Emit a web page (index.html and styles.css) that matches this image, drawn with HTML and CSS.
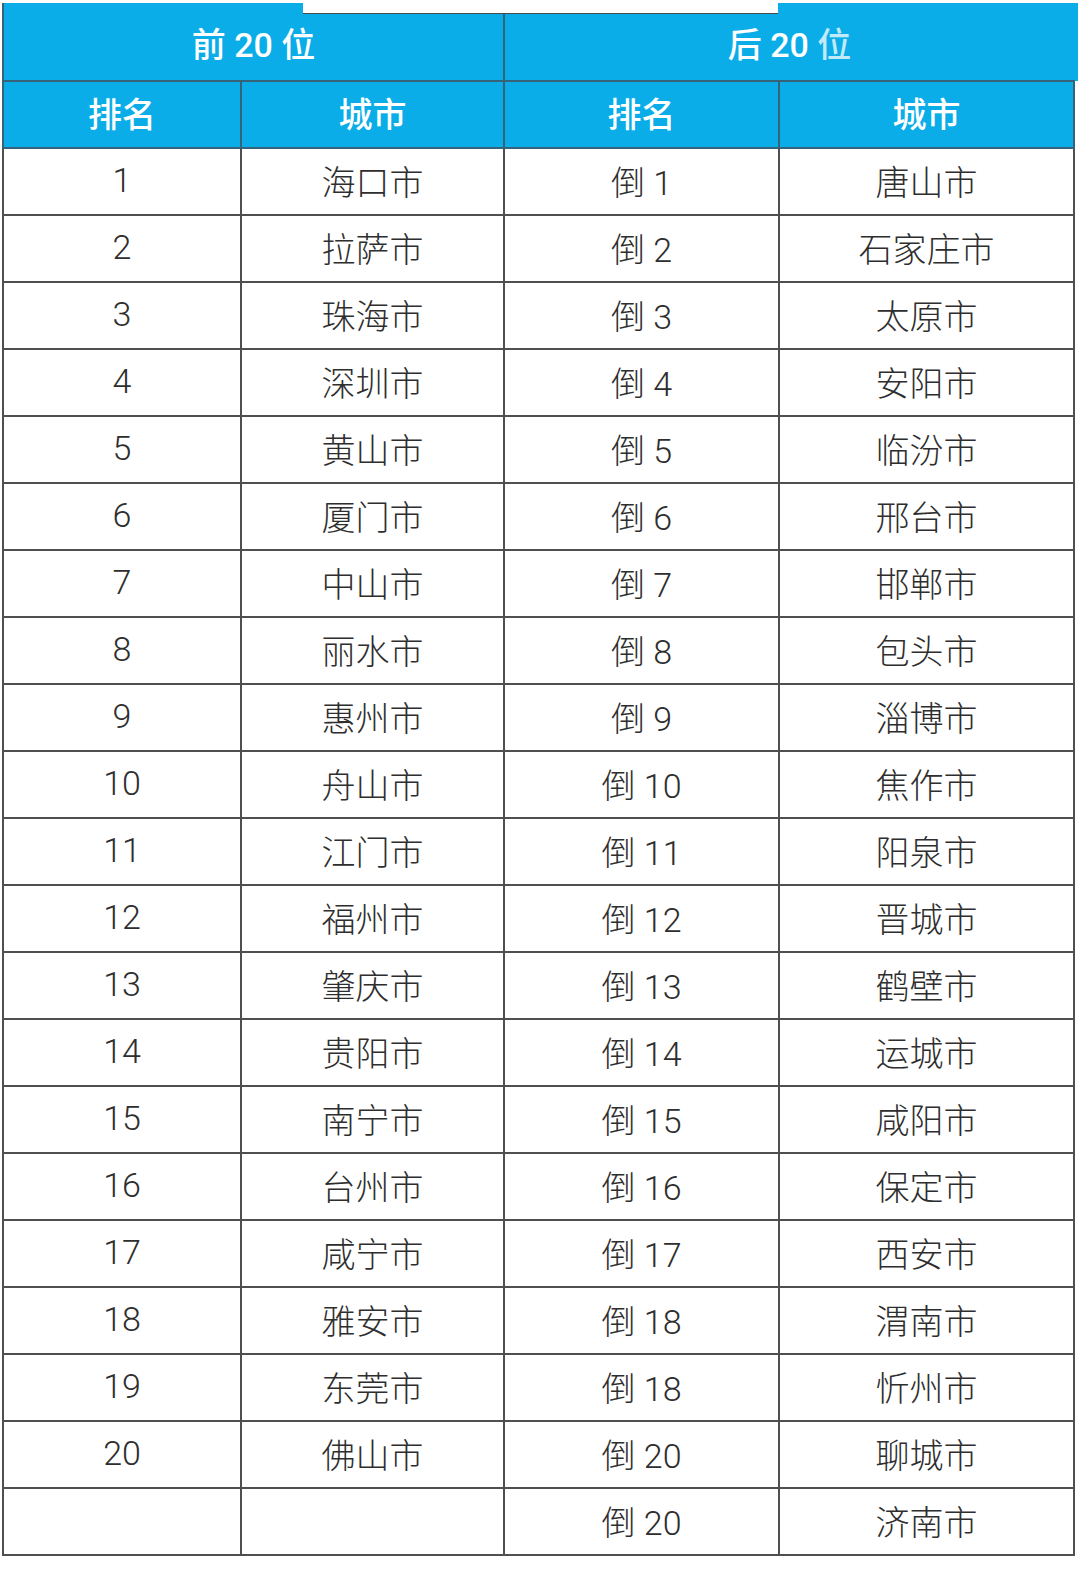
FILE: index.html
```html
<!DOCTYPE html>
<html lang="zh-CN">
<head>
<meta charset="utf-8">
<title>城市排名</title>
<link rel="stylesheet" href="styles.css">
</head>
<body>
<div class="page">
  <div class="gap-mask"></div>
  <table class="rank">
    <colgroup>
      <col class="c1"><col class="c2"><col class="c3"><col class="c4">
    </colgroup>
    <thead>
      <tr class="group">
        <th colspan="2">前 20 位</th>
        <th colspan="2" class="right-tab">后 20 <span class="blur">位</span></th>
      </tr>
      <tr class="sub">
        <th>排名</th><th>城市</th><th>排名</th><th>城市</th>
      </tr>
    </thead>
    <tbody>
      <tr><td>1</td><td>海口市</td><td>倒 1</td><td>唐山市</td></tr>
      <tr><td>2</td><td>拉萨市</td><td>倒 2</td><td>石家庄市</td></tr>
      <tr><td>3</td><td>珠海市</td><td>倒 3</td><td>太原市</td></tr>
      <tr><td>4</td><td>深圳市</td><td>倒 4</td><td>安阳市</td></tr>
      <tr><td>5</td><td>黄山市</td><td>倒 5</td><td>临汾市</td></tr>
      <tr><td>6</td><td>厦门市</td><td>倒 6</td><td>邢台市</td></tr>
      <tr><td>7</td><td>中山市</td><td>倒 7</td><td>邯郸市</td></tr>
      <tr><td>8</td><td>丽水市</td><td>倒 8</td><td>包头市</td></tr>
      <tr><td>9</td><td>惠州市</td><td>倒 9</td><td>淄博市</td></tr>
      <tr><td>10</td><td>舟山市</td><td>倒 10</td><td>焦作市</td></tr>
      <tr><td>11</td><td>江门市</td><td>倒 11</td><td>阳泉市</td></tr>
      <tr><td>12</td><td>福州市</td><td>倒 12</td><td>晋城市</td></tr>
      <tr><td>13</td><td>肇庆市</td><td>倒 13</td><td>鹤壁市</td></tr>
      <tr><td>14</td><td>贵阳市</td><td>倒 14</td><td>运城市</td></tr>
      <tr><td>15</td><td>南宁市</td><td>倒 15</td><td>咸阳市</td></tr>
      <tr><td>16</td><td>台州市</td><td>倒 16</td><td>保定市</td></tr>
      <tr><td>17</td><td>咸宁市</td><td>倒 17</td><td>西安市</td></tr>
      <tr><td>18</td><td>雅安市</td><td>倒 18</td><td>渭南市</td></tr>
      <tr><td>19</td><td>东莞市</td><td>倒 18</td><td>忻州市</td></tr>
      <tr><td>20</td><td>佛山市</td><td>倒 20</td><td>聊城市</td></tr>
      <tr><td></td><td></td><td>倒 20</td><td>济南市</td></tr>
    </tbody>
  </table>
</div>
</body>
</html>
```

FILE: styles.css
```css
html, body {
  margin: 0;
  padding: 0;
  background: #ffffff;
}

body {
  font-family: Roboto, "Noto Sans CJK SC", sans-serif;
  color: #2e2e2e;
}

.page {
  position: relative;
  padding: 3px 0 0 2px;
}

.gap-mask {
  position: absolute;
  left: 303px;
  top: 0;
  width: 475px;
  height: 13px;
  background: #ffffff;
  border-bottom: 1px solid #4a4a4a;
  z-index: 2;
}

.rank {
  border-collapse: collapse;
  table-layout: fixed;
  width: 1071px;
}

.c1 { width: 238px; }
.c2 { width: 263px; }
.c3 { width: 275px; }
.c4 { width: 295px; }

.rank th,
.rank td {
  border: 2px solid #4f4f4f;
  padding: 0;
  text-align: center;
  vertical-align: middle;
}

.rank thead th {
  background: #0aade8;
  color: #ffffff;
  font-weight: 500;
  font-size: 34px;
  font-family: Roboto, "Noto Sans CJK SC", sans-serif;
  border-color: #35637a;
}

.rank .group th {
  height: 76px;
  border-top: none;
  padding-top: 1px;
}

.rank .group .right-tab {
  border-right: none;
  box-shadow: 4px 0 0 #0aade8;
}

.rank .sub th {
  height: 61px;
  padding-bottom: 4px;
}

.rank td {
  height: 62px;
  padding-bottom: 3px;
  font-size: 34px;
  font-weight: 300;
  background: #ffffff;
}

.blur {
  opacity: 0.75;
}
```
